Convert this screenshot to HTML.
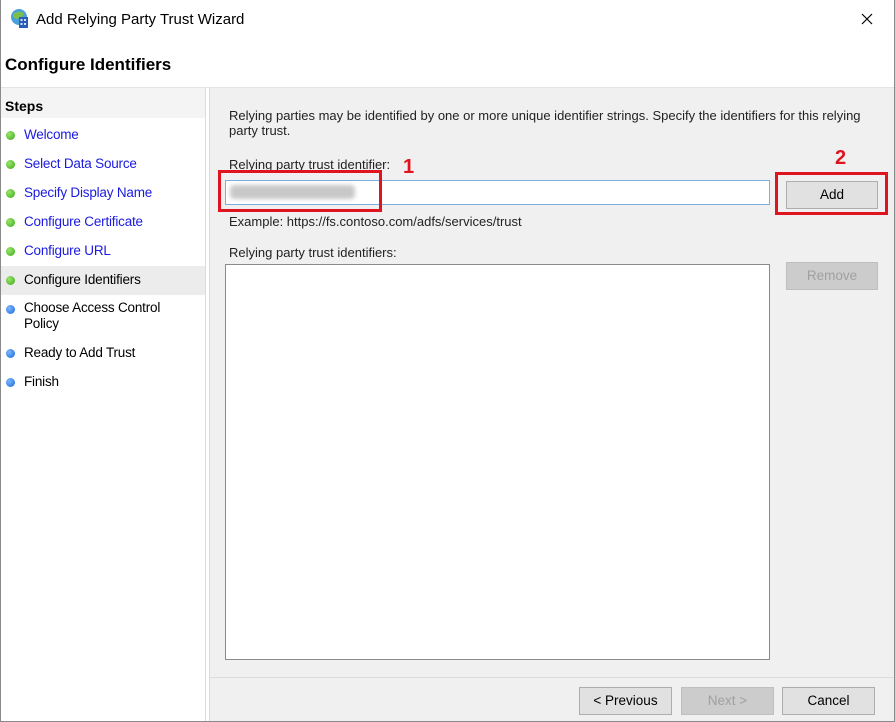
<!DOCTYPE html>
<html><head><meta charset="utf-8"><style>
*{margin:0;padding:0;box-sizing:border-box}
body{width:895px;height:722px;overflow:hidden;background:#fff;font-family:"Liberation Sans",sans-serif;font-size:13.5px;color:#000;position:relative}
.win{position:absolute;left:0;top:0;width:895px;height:722px;border:1px solid #8a8a8a;border-top:none}
.abs{position:absolute}
.step{position:absolute;left:24px;color:#1a1ae0;font-size:13.5px;letter-spacing:-0.2px}
.dot{position:absolute;left:6px;width:9px;height:9px;border-radius:50%}
.g{background:radial-gradient(circle at 35% 35%,#9be66a,#3aa81a)}
.b{background:radial-gradient(circle at 35% 35%,#7ab8ff,#1a66d8)}
.btn{position:absolute;height:28px;background:#e1e1e1;border:1px solid #adadad;text-align:center;line-height:26px;font-size:13.5px}
.dis{color:#a0a0a0;background:#cccccc;border-color:#bfbfbf}
.red{position:absolute;border:3px solid #e0141e}
.num{position:absolute;color:#e0141e;font-weight:bold;font-size:20px}
</style></head><body>
<div class="win"></div>
<svg class="abs" style="left:10px;top:8px" width="20" height="22" viewBox="0 0 20 22"><circle cx="9" cy="9" r="8" fill="#4aa0d8"/><path d="M3 6 Q9 2 14 5 L12 10 Q6 12 3 9Z" fill="#7ac04a"/><rect x="9" y="9" width="9" height="11" fill="#2a5cb8"/><g fill="#cfe4ff"><rect x="10.5" y="11" width="2" height="2"/><rect x="14" y="11" width="2" height="2"/><rect x="10.5" y="15" width="2" height="2"/><rect x="14" y="15" width="2" height="2"/></g></svg>
<div class="abs" style="left:36px;top:11px;font-size:15px">Add Relying Party Trust Wizard</div>
<svg class="abs" style="left:861px;top:13px" width="12" height="12"><path d="M1 1L11 11M11 1L1 11" stroke="#000" stroke-width="1.2"/></svg>
<div class="abs" style="left:5px;top:55px;font-size:17px;font-weight:bold">Configure Identifiers</div>
<div class="abs" style="left:1px;top:87px;width:893px;height:1px;background:#e4e4e4"></div>
<div class="abs" style="left:1px;top:88px;width:204px;height:30px;background:#f4f4f4"></div>
<div class="abs" style="left:5px;top:98px;font-weight:bold;font-size:14px">Steps</div>
<div class="abs" style="left:205px;top:88px;width:1px;height:633px;background:#dcdcdc"></div>
<div class="abs" style="left:209px;top:88px;width:685px;height:633px;background:#f0f0f0;border-left:1px solid #dcdcdc"></div>
<div class="abs" style="left:1px;top:266px;width:204px;height:29px;background:#ececec"></div>
<div class="dot g" style="top:131px"></div><div class="step" style="top:127px">Welcome</div>
<div class="dot g" style="top:160px"></div><div class="step" style="top:156px">Select Data Source</div>
<div class="dot g" style="top:189px"></div><div class="step" style="top:185px">Specify Display Name</div>
<div class="dot g" style="top:218px"></div><div class="step" style="top:214px">Configure Certificate</div>
<div class="dot g" style="top:247px"></div><div class="step" style="top:243px">Configure URL</div>
<div class="dot g" style="top:276px"></div><div class="step" style="top:272px;color:#000">Configure Identifiers</div>
<div class="dot b" style="top:305px"></div><div class="step" style="top:300px;color:#000;line-height:16px">Choose Access Control<br>Policy</div>
<div class="dot b" style="top:349px"></div><div class="step" style="top:345px;color:#000">Ready to Add Trust</div>
<div class="dot b" style="top:378px"></div><div class="step" style="top:374px;color:#000">Finish</div>
<div class="abs" style="left:229px;top:108px;width:640px;line-height:15px;font-size:13px;color:#222">Relying parties may be identified by one or more unique identifier strings. Specify the identifiers for this relying party trust.</div>
<div class="abs" style="left:229px;top:157px;font-size:13px;color:#222">Relying party trust identifier:</div>
<div class="abs" style="left:225px;top:180px;width:545px;height:25px;background:#fff;border:1px solid #7aaee0"></div>
<div class="abs" style="left:230px;top:185px;width:125px;height:14px;background:#c8c8c8;border-radius:4px;filter:blur(2px)"></div>
<div class="red" style="left:218px;top:170px;width:164px;height:42px"></div>
<div class="num" style="left:403px;top:156px">1</div>
<div class="abs" style="left:229px;top:214px;font-size:13px;color:#222">Example: https://fs.contoso.com/adfs/services/trust</div>
<div class="abs" style="left:229px;top:245px;font-size:13px;color:#222">Relying party trust identifiers:</div>
<div class="abs" style="left:225px;top:264px;width:545px;height:396px;background:#fff;border:1px solid #8a8a8a"></div>
<div class="red" style="left:775px;top:172px;width:113px;height:43px"></div>
<div class="num" style="left:835px;top:147px">2</div>
<div class="btn" style="left:786px;top:181px;width:92px">Add</div>
<div class="btn dis" style="left:786px;top:262px;width:92px">Remove</div>
<div class="abs" style="left:210px;top:677px;width:684px;height:1px;background:#dcdcdc"></div>
<div class="btn" style="left:579px;top:687px;width:93px">&lt; Previous</div>
<div class="btn dis" style="left:681px;top:687px;width:93px">Next &gt;</div>
<div class="btn" style="left:782px;top:687px;width:93px">Cancel</div>
</body></html>
